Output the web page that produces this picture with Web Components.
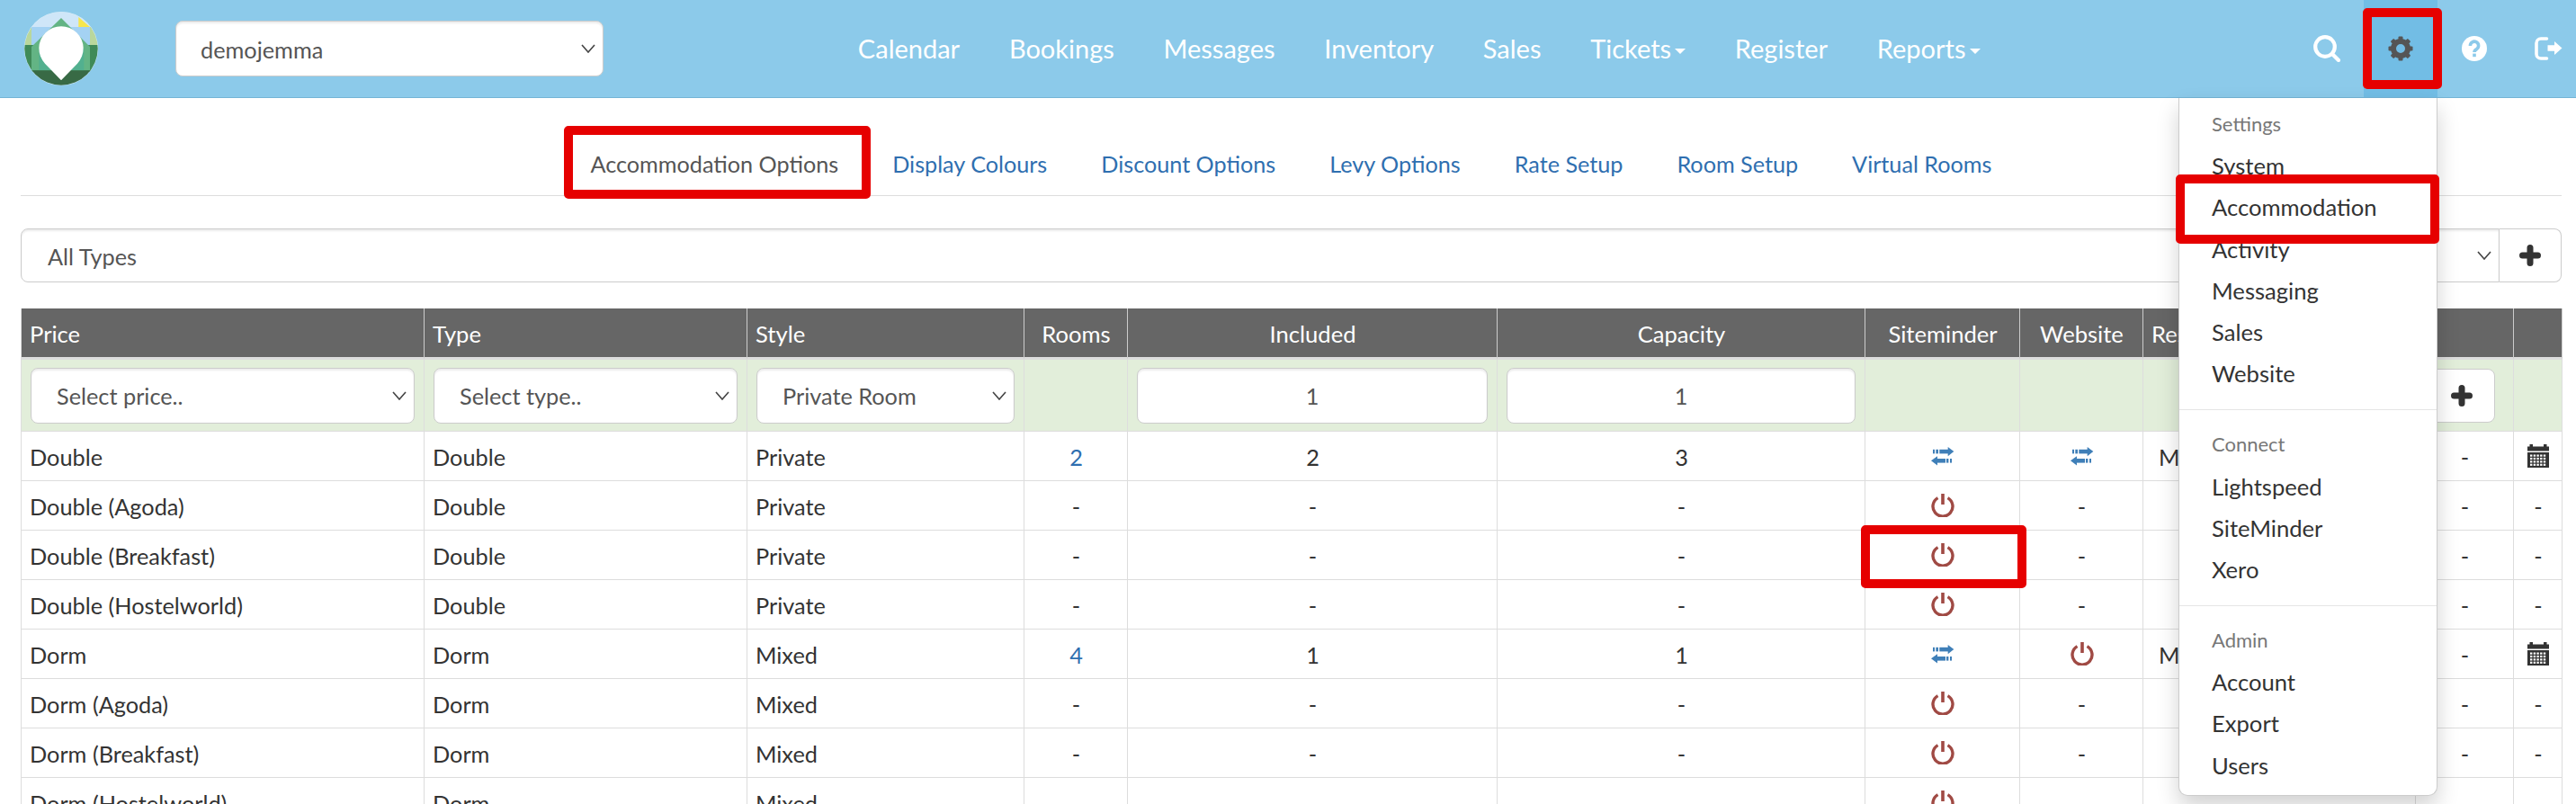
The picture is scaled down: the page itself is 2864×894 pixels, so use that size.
<!DOCTYPE html>
<html lang="en">
<head>
<meta charset="utf-8">
<title>Accommodation Options</title>
<style>
    html, body { margin: 0; height: 894px; overflow: hidden; background: #fff; }
    body { font: 25.3px/1.2 Lato, "Open Sans", sans-serif; color: #333; position: relative; }
</style>
</head>
<body>
<app-header></app-header>
<page-main>
    <tab-bar></tab-bar>
    <type-filter></type-filter>
    <rooms-table></rooms-table>
</page-main>
<settings-menu></settings-menu>
<red-mark x="2627" y="9" w="88" h="90"></red-mark>
<red-mark x="627" y="140" w="341" h="81"></red-mark>
<red-mark x="2419" y="194" w="293" h="77"></red-mark>
<red-mark x="2069" y="584" w="184" h="70"></red-mark>

<script>
// todos los iconos en un solo lugar
const gearTeeth = [0, 45, 90, 135, 180, 225, 270, 315]
    .map(a => `<rect x="11.5" y="0.5" width="5" height="6" rx="1" transform="rotate(${a} 14 14)"/>`).join("");
let calendarDots = "";
for (let r = 0; r < 4; r++) {
    for (let c = 0; c < 5; c++) {
        calendarDots += `<rect x="${3 + c * 3.7}" y="${11.5 + r * 3.4}" width="2.4" height="2.2" fill="#fff"/>`;
    }
}
const ICONS = {
    search: `<svg width="30" height="30" viewBox="0 0 30 30" fill="none" stroke="#fff" stroke-width="4.2"><circle cx="13" cy="13" r="10.8"/><path d="M21 21l7 7" stroke-linecap="round"/></svg>`,
    gear: `<svg width="28" height="28" viewBox="0 0 28 28" fill="#555">${gearTeeth}<circle cx="14" cy="14" r="8" fill="none" stroke="#555" stroke-width="6"/></svg>`,
    help: `<svg width="28" height="28" viewBox="0 0 28 28"><circle cx="14" cy="14" r="14" fill="#fff"/><path d="M9.4 11a4.6 4.6 0 1 1 7.2 3.6c-1.7 1-2.6 1.7-2.6 3.4" fill="none" stroke="#8ccaea" stroke-width="3.6"/><rect x="12.2" y="19.6" width="3.6" height="3.6" fill="#8ccaea"/></svg>`,
    logout: `<svg width="31" height="26" viewBox="0 0 31 26"><path d="M13.5 2H7a5 5 0 0 0-5 5v12a5 5 0 0 0 5 5h6.5" fill="none" stroke="#fff" stroke-width="3.6" stroke-linecap="round"/><path d="M14.5 9.2H22V5l8.5 7.5L22 20v-4.2h-7.5z" fill="#fff"/></svg>`,
    swap: `<svg width="26" height="21" viewBox="0 0 26 21" fill="#3f7fb8"><rect x="2" y="2.8" width="2" height="4.6"/><rect x="5.3" y="2.8" width="2.7" height="4.6"/><rect x="9.3" y="2.8" width="10" height="4.6"/><path d="M18.7 0l6.6 5.1-6.6 5.1z"/><rect x="7" y="13" width="9" height="4.6"/><rect x="17" y="13" width="2.4" height="4.6"/><rect x="21" y="13" width="2" height="4.6"/><path d="M7 10.2L0 15.3l7 5.1z"/></svg>`,
    power: `<svg width="26" height="26" viewBox="0 0 26 26" fill="none" stroke="#a04a44" stroke-width="3.4"><path d="M7.5 4.6a11 11 0 1 0 11 0"/><path d="M13 0v12" stroke-width="3.6"/></svg>`,
    calendar: `<svg width="24" height="26" viewBox="0 0 24 26" fill="#333"><rect x="2.5" y="0" width="3.5" height="4"/><rect x="18" y="0" width="3.5" height="4"/><rect x="0" y="2.5" width="24" height="5"/><rect x="0" y="9" width="24" height="17"/>${calendarDots}</svg>`,
    plus: `<svg width="24" height="24" viewBox="0 0 24 24"><path d="M12 3.5v17M3.5 12h17" stroke="#333" stroke-width="7" stroke-linecap="round"/></svg>`,
    chevron: `<svg width="16" height="10" viewBox="0 0 16 10" fill="none" stroke="#444" stroke-width="1.6"><path d="M1 1l7 8 7-8"/></svg>`
};

class AppIcon extends HTMLElement {
    constructor() {
        super();
        this.attachShadow({ mode: "open" });
    }
    connectedCallback() {
        this.shadowRoot.innerHTML = `
            <style>
                :host { display: inline-flex; line-height: 0; }
            </style>
            ${ICONS[this.getAttribute("name")]}
        `;
    }
}
customElements.define("app-icon", AppIcon);

// caja de select, el texto entra por el slot
class PickBox extends HTMLElement {
    constructor() {
        super();
        this.attachShadow({ mode: "open" });
    }
    connectedCallback() {
        this.shadowRoot.innerHTML = `
            <style>
                :host {
                    display: flex;
                    align-items: center;
                    justify-content: space-between;
                    box-sizing: border-box;
                    height: 62px;
                    padding: 0 8px 0 28px;
                    background: #fff;
                    border: 1px solid #ccc;
                    border-radius: 8px;
                    box-shadow: inset 0 2px 2px rgba(0, 0, 0, .08);
                    color: #555;
                }
                div { white-space: nowrap; overflow: hidden; padding-top: 2px; }
            </style>
            <div><slot></slot></div>
            <app-icon name="chevron"></app-icon>
        `;
    }
}
customElements.define("pick-box", PickBox);

class AppHeader extends HTMLElement {
    constructor() {
        super();
        this.attachShadow({ mode: "open" });
    }
    getLogo() {
        // coordenadas tomadas del logo ampliado 3x
        return /*html*/`
            <svg class="logo" width="82" height="82" viewBox="81 39 246 246">
                <defs><clipPath id="disc"><circle cx="204" cy="162" r="122"/></clipPath></defs>
                <circle cx="204" cy="162" r="123" fill="#d8ecf6"/>
                <g clip-path="url(#disc)">
                    <rect x="81" y="39" width="246" height="60" fill="#cfe6f8"/>
                    <rect x="105" y="90" width="195" height="70" fill="#a4d2f3"/>
                    <rect x="81" y="90" width="24" height="80" fill="#b9d79c"/>
                    <rect x="300" y="90" width="27" height="80" fill="#b9d79c"/>
                    <path d="M262 57l38 33h-38z" fill="#f7e64e"/>
                    <path d="M81 150h246v90H81z" fill="#3f8a58"/>
                    <path d="M204 60l96 96v79H105v-79z" fill="#63b484"/>
                    <rect x="130" y="160" width="150" height="75" fill="#52b08f"/>
                    <rect x="81" y="235" width="246" height="50" fill="#386a45"/>
                </g>
                <path d="M204 268L150 212a74 74 0 1 1 108 0z" fill="#fff"/>
            </svg>
        `;
    }
    getStyle() {
        return /*html*/`
            <style>
                :host {
                    display: flex;
                    align-items: center;
                    height: 109px;
                    box-sizing: border-box;
                    background: #8ccaea;
                    border-bottom: 1px solid #74b4d6;
                }
                .logo { margin-left: 27px; flex: none; }
                pick-box { width: 476px; margin-left: 86px; flex: none; color: #555; padding-left: 27px; }
                nav { display: flex; margin-left: 255.5px; flex: 1; color: #fff; font-size: 29px; }
                nav a { padding: 0 27.35px; white-space: nowrap; }
                .caret {
                    display: inline-block;
                    margin-left: 4px;
                    vertical-align: middle;
                    border-top: 6px solid #fff;
                    border-left: 6px solid transparent;
                    border-right: 6px solid transparent;
                }
                .icons { display: flex; flex: none; width: 318px; align-self: stretch; }
                .icons div {
                    flex: none;
                    width: 82px;
                    display: flex;
                    align-items: center;
                    justify-content: center;
                }
                .icons .on { background: #72bde5; }
            </style>
        `;
    }
    render() {
        const links = ["Calendar", "Bookings", "Messages", "Inventory", "Sales", "Tickets+", "Register", "Reports+"];
        this.shadowRoot.innerHTML = `
            ${this.getStyle()}
            ${this.getLogo()}
            <pick-box>demojemma</pick-box>
            <nav>
                ${links.map(l => l.endsWith("+")
                    ? `<a>${l.slice(0, -1)}<span class="caret"></span></a>`
                    : `<a>${l}</a>`).join("")}
            </nav>
            <div class="icons">
                <div><app-icon name="search"></app-icon></div>
                <div class="on"><app-icon name="gear"></app-icon></div>
                <div><app-icon name="help"></app-icon></div>
                <div><app-icon name="logout"></app-icon></div>
            </div>
        `;
    }
    connectedCallback() {
        this.render();
    }
}
customElements.define("app-header", AppHeader);

class PageMain extends HTMLElement {
    constructor() {
        super();
        this.attachShadow({ mode: "open" });
    }
    connectedCallback() {
        this.shadowRoot.innerHTML = `
            <style>
                :host { display: block; padding: 0 16px 0 23px; }
            </style>
            <slot></slot>
        `;
    }
}
customElements.define("page-main", PageMain);

class TabBar extends HTMLElement {
    constructor() {
        super();
        this.attachShadow({ mode: "open" });
    }
    connectedCallback() {
        const tabs = ["Display Colours", "Discount Options", "Levy Options", "Rate Setup", "Room Setup", "Virtual Rooms"];
        this.shadowRoot.innerHTML = `
            <style>
                :host {
                    display: flex;
                    justify-content: center;
                    padding-top: 40px;
                    border-bottom: 1px solid #ddd;
                    font-size: 25.2px;
                }
                a {
                    padding: 0 30px;
                    height: 68px;
                    line-height: 67px;
                    color: #2f6fb0;
                    white-space: nowrap;
                }
                a.on { color: #555; }
            </style>
            <a class="on">Accommodation Options</a>
            ${tabs.map(t => `<a>${t}</a>`).join("")}
        `;
    }
}
customElements.define("tab-bar", TabBar);

class TypeFilter extends HTMLElement {
    constructor() {
        super();
        this.attachShadow({ mode: "open" });
    }
    connectedCallback() {
        this.shadowRoot.innerHTML = `
            <style>
                :host { display: flex; height: 60px; margin-top: 36px; }
                pick-box {
                    flex: 1;
                    height: 60px;
                    border-radius: 8px 0 0 8px;
                    padding-left: 29px;
                    padding-right: 8px;
                }
                div {
                    flex: none;
                    width: 69px;
                    box-sizing: border-box;
                    display: flex;
                    align-items: center;
                    justify-content: center;
                    border: 1px solid #ccc;
                    border-left: 0;
                    border-radius: 0 8px 8px 0;
                }
            </style>
            <pick-box>All Types</pick-box>
            <div><app-icon name="plus"></app-icon></div>
        `;
    }
}
customElements.define("type-filter", TypeFilter);

class RoomsTable extends HTMLElement {
    constructor() {
        super();
        this.attachShadow({ mode: "open" });
    }
    getStyle() {
        return /*html*/`
            <style>
                :host { display: block; margin-top: 29px; }
                table {
                    width: 2825px;
                    table-layout: fixed;
                    border-collapse: separate;
                    border-spacing: 0;
                    border-left: 1px solid #ddd;
                }
                th, td {
                    box-sizing: border-box;
                    padding: 2px 10px 0 9px;
                    border-right: 1px solid #ddd;
                    border-bottom: 1px solid #ddd;
                    font-weight: 400;
                    white-space: nowrap;
                    overflow: hidden;
                }
                th {
                    height: 57px;
                    background: #666;
                    color: #fff;
                    font-size: 25.6px;
                    text-align: left;
                    border-bottom: 3px solid #ddd;
                    border-right-color: #ccc;
                }
                td { height: 55px; }
                tr.add td { height: 80px; background: #e2eeda; padding: 0 10px; }
                th.c, td.c { text-align: center; padding-left: 11px; }
                td.me { padding-left: 17px; }
                a { color: #2f6fb0; }
                app-icon { vertical-align: middle; position: relative; top: -4px; }
                .add button {
                    display: inline-flex;
                    align-items: center;
                    justify-content: center;
                    float: right;
                    width: 74px;
                    height: 60px;
                    margin-right: 10px;
                    padding: 0;
                    background: #fff;
                    border: 1px solid #ccc;
                    border-radius: 8px;
                }
                .add app-icon { top: 0; }
                .add pick-box.c { justify-content: center; padding: 0; }
            </style>
        `;
    }
    getRows() {
        const kinds = [["", "Double", "Private"], ["", "Dorm", "Mixed"]];
        const rows = [];
        for (const [, type, style] of kinds) {
            const dorm = type === "Dorm";
            rows.push([type, type, style, dorm ? "4" : "2", dorm ? "1" : "2", dorm ? "1" : "3", "swap", dorm ? "power" : "swap", "Me", "-", "calendar"]);
            for (const tag of ["Agoda", "Breakfast", "Hostelworld"]) {
                rows.push([`${type} (${tag})`, type, style, "-", "-", "-", "power", "-", "", "-", "-"]);
            }
        }
        return rows;
    }
    renderCell(value, i) {
        if (i < 3) return `<td>${value}</td>`;
        if (i === 8) return `<td class="me">${value}</td>`;
        if (ICONS[value]) return `<td class="c"><app-icon name="${value}"></app-icon></td>`;
        if (i === 3 && value !== "-") return `<td class="c"><a>${value}</a></td>`;
        return `<td class="c">${value}</td>`;
    }
    render() {
        const widths = [448, 359, 308, 115, 411, 409, 172, 137, 303, 109, 54];
        const heads = ["Price", "Type", "Style", "Rooms", "Included", "Capacity", "Siteminder", "Website", "Res", "", ""];
        this.shadowRoot.innerHTML = `
            ${this.getStyle()}
            <table>
                <colgroup>${widths.map(w => `<col style="width:${w}px">`).join("")}</colgroup>
                <tr>${heads.map((h, i) => `<th class="${i > 2 && i !== 8 ? "c" : ""}">${h}</th>`).join("")}</tr>
                <tr class="add">
                    <td><pick-box>Select price..</pick-box></td>
                    <td><pick-box>Select type..</pick-box></td>
                    <td><pick-box>Private Room</pick-box></td>
                    <td></td>
                    <td><pick-box class="c">1</pick-box></td>
                    <td><pick-box class="c">1</pick-box></td>
                    <td></td>
                    <td></td>
                    <td></td>
                    <td><button><app-icon name="plus"></app-icon></button></td>
                    <td></td>
                </tr>
                ${this.getRows().map(r => `<tr>${r.map((v, i) => this.renderCell(v, i)).join("")}</tr>`).join("")}
            </table>
        `;
        // el chevron no va en las cajas numericas
        this.shadowRoot.querySelectorAll("pick-box.c").forEach(b => {
            b.shadowRoot.querySelector("app-icon").style.display = "none";
        });
    }
    connectedCallback() {
        this.render();
    }
}
customElements.define("rooms-table", RoomsTable);

// menu abierto sobre la tabla
class SettingsMenu extends HTMLElement {
    constructor() {
        super();
        this.attachShadow({ mode: "open" });
    }
    connectedCallback() {
        const groups = [
            ["Settings", "System", "Accommodation", "Activity", "Messaging", "Sales", "Website"],
            ["Connect", "Lightspeed", "SiteMinder", "Xero"],
            ["Admin", "Account", "Export", "Users"]
        ];
        this.shadowRoot.innerHTML = `
            <style>
                :host {
                    position: absolute;
                    left: 2422px;
                    top: 109px;
                    width: 288px;
                    box-sizing: border-box;
                    padding: 6px 0 10px;
                    background: #fff;
                    border: 1px solid #ccc;
                    border-top: 0;
                    border-radius: 0 0 10px 10px;
                    box-shadow: 0 12px 24px rgba(0, 0, 0, .18);
                    font-size: 25.6px;
                }
                div { height: 46.2px; line-height: 46.2px; padding-left: 36px; white-space: nowrap; }
                .label { font-size: 22px; color: #777; }
                hr { margin: 17px 0 15px; border: 0; border-top: 1px solid #e5e5e5; }
            </style>
            ${groups.map(([label, ...items]) => `
                <div class="label">${label}</div>
                ${items.map(i => `<div>${i}</div>`).join("")}
            `).join("<hr>")}
        `;
    }
}
customElements.define("settings-menu", SettingsMenu);

// recuadros rojos de la captura
class RedMark extends HTMLElement {
    constructor() {
        super();
        this.attachShadow({ mode: "open" });
    }
    connectedCallback() {
        this.shadowRoot.innerHTML = `
            <style>
                :host {
                    position: absolute;
                    box-sizing: border-box;
                    border: 10px solid #e60000;
                    border-radius: 5px;
                }
            </style>
        `;
        this.style.left = this.getAttribute("x") + "px";
        this.style.top = this.getAttribute("y") + "px";
        this.style.width = this.getAttribute("w") + "px";
        this.style.height = this.getAttribute("h") + "px";
    }
}
customElements.define("red-mark", RedMark);
</script>
</body>
</html>
